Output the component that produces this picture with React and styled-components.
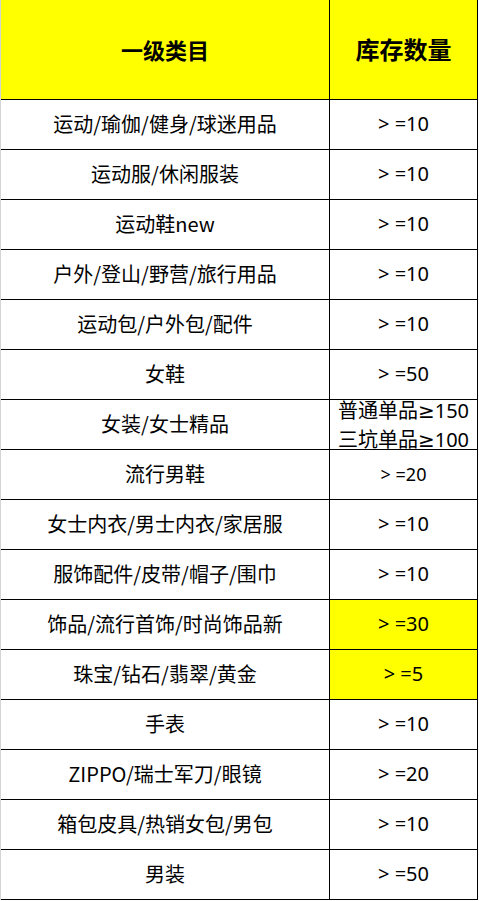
import React from "react";
import styled, { createGlobalStyle } from "styled-components";

const Global = createGlobalStyle`
  html, body { margin: 0; padding: 0; background: #ffffff; }
  body { font-family: "Noto Sans CJK SC", "Noto Sans", sans-serif; color: #000; }
`;

const Table = styled.div`
  display: grid;
  grid-template-columns: 329px 148px;
  width: 478px;
  border-left: 1px solid #d4d4d4;
  box-sizing: border-box;
`;

const Cell = styled.div`
  box-sizing: border-box;
  height: ${(p) => (p.$head ? 100 : 50)}px;
  display: flex;
  flex-direction: column;
  align-items: center;
  justify-content: center;
  border-right: 1px solid #000;
  border-bottom: 1px solid #000;
  background: ${(p) => (p.$yellow ? "#ffff00" : "#ffffff")};
  font-family: ${(p) =>
    p.$num
      ? `"Noto Sans", "DejaVu Sans", "Noto Sans CJK SC", sans-serif`
      : `"Noto Sans CJK SC", "Noto Sans", sans-serif`};
  font-size: ${(p) => p.$size || 20}px;
  font-weight: ${(p) => (p.$head ? 700 : 400)};
  line-height: ${(p) => (p.$multi ? "28px" : "1")};
  padding-bottom: ${(p) => (p.$multi ? 0 : 2)}px;
  white-space: pre;
`;

const Line = styled.span`
  display: block;
`;

const Mixed = styled.span`
  font-family: "Noto Sans CJK SC", sans-serif;
`;

const rows = [
  ["运动/瑜伽/健身/球迷用品", "> =10"],
  ["运动服/休闲服装", "> =10"],
  ["运动鞋new", "> =10"],
  ["户外/登山/野营/旅行用品", "> =10"],
  ["运动包/户外包/配件", "> =10"],
  ["女鞋", "> =50"],
  ["女装/女士精品", [["普通单品", "≥150"], ["三坑单品", "≥100"]]],
  ["流行男鞋", "> =20", { size: 18 }],
  ["女士内衣/男士内衣/家居服", "> =10"],
  ["服饰配件/皮带/帽子/围巾", "> =10"],
  ["饰品/流行首饰/时尚饰品新", "> =30", { yellow: true }],
  ["珠宝/钻石/翡翠/黄金", "> =5", { yellow: true }],
  ["手表", "> =10"],
  ["ZIPPO/瑞士军刀/眼镜", "> =20"],
  ["箱包皮具/热销女包/男包", "> =10"],
  ["男装", "> =50"],
];

export default function App() {
  return (
    <>
      <Global />
      <Table>
        <Cell $head $yellow $size={22}>一级类目</Cell>
        <Cell $head $yellow $size={24}>库存数量</Cell>
        {rows.map(([cat, qty, opt = {}], i) => (
          <React.Fragment key={i}>
            <Cell>{cat}</Cell>
            {Array.isArray(qty) ? (
              <Cell $multi $num $yellow={opt.yellow}>
                {qty.map(([a, b]) => (
                  <Line key={a + b}>
                    <Mixed>{a}</Mixed>
                    {b}
                  </Line>
                ))}
              </Cell>
            ) : (
              <Cell $num $yellow={opt.yellow} $size={opt.size}>
                {qty}
              </Cell>
            )}
          </React.Fragment>
        ))}
      </Table>
    </>
  );
}
